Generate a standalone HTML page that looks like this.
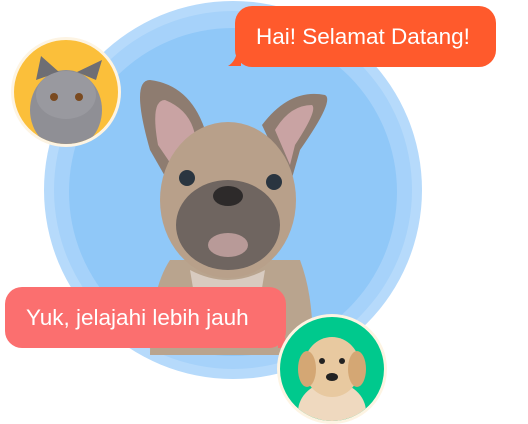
<!DOCTYPE html>
<html><head><style>
html,body{margin:0;padding:0;background:#fff;width:528px;height:424px;overflow:hidden;font-family:"Liberation Sans",sans-serif}
.b{position:absolute;color:#fff;font-size:22.5px;display:flex;align-items:center}
</style></head><body>
<svg width="528" height="424" style="position:absolute;left:0;top:0">
<circle cx="233" cy="190" r="189" fill="#b6dafb"/>
<circle cx="233" cy="190" r="179" fill="#a6d2fa"/>
<circle cx="233" cy="192" r="164" fill="#90c8f8"/>
<path d="M150 355 Q150 290 170 260 L300 260 Q315 300 312 355 Z" fill="#b9a48e"/>
<path d="M150 150 Q130 80 150 80 Q190 85 205 130 L170 185 Z" fill="#8e7c70"/>
<path d="M158 145 Q150 100 165 100 Q190 110 195 135 L175 170 Z" fill="#c9a3a3"/>
<path d="M300 150 Q335 100 325 95 Q290 88 262 125 L290 185 Z" fill="#8e7c70"/>
<path d="M295 145 Q318 110 312 105 Q290 105 275 130 L290 165 Z" fill="#c9a3a3"/>
<ellipse cx="228" cy="200" rx="68" ry="78" fill="#b8a08a"/>
<ellipse cx="228" cy="225" rx="52" ry="45" fill="#6f6560"/>
<ellipse cx="228" cy="196" rx="15" ry="10" fill="#2d2a2a"/>
<ellipse cx="228" cy="245" rx="20" ry="12" fill="#b89a98"/>
<circle cx="187" cy="178" r="8" fill="#2a3540"/>
<circle cx="274" cy="182" r="8" fill="#2a3540"/>
<path d="M190 270 Q228 290 265 270 L260 300 Q228 310 195 300 Z" fill="#d8cbc0"/>
</svg>
<div class="b" style="left:235px;top:6px;width:261px;height:61px;background:#ff5a2c;border-radius:17px;padding-left:21px;box-sizing:border-box;">Hai! Selamat Datang!</div>
<svg width="20" height="16" style="position:absolute;left:227px;top:52px"><path d="M14 0 L14 14 L1 14 Q8 10 10 0 Z" fill="#ff5a2c"/></svg>
<div style="position:absolute;left:11px;top:37px;width:104px;height:104px;border-radius:50%;background:#fbbf3a;border:3px solid #fdf4e3;overflow:hidden">
<svg width="104" height="104"><ellipse cx="52" cy="70" rx="36" ry="40" fill="#8f8f95"/><path d="M22 40 L27 16 L45 32 Z M82 40 L88 20 L63 32 Z" fill="#6e6e74"/><ellipse cx="52" cy="55" rx="30" ry="24" fill="#99999f"/><circle cx="40" cy="57" r="4" fill="#7a4a20"/><circle cx="65" cy="57" r="4" fill="#7a4a20"/></svg></div>
<div class="b" style="left:5px;top:287px;width:281px;height:61px;background:#fb6f6f;border-radius:17px;padding-left:21px;box-sizing:border-box;">Yuk, jelajahi lebih jauh</div>
<svg width="20" height="16" style="position:absolute;left:278px;top:334px"><path d="M0 0 L0 14 L16 14 Q8 10 6 0 Z" fill="#fb6f6f"/></svg>
<div style="position:absolute;left:277px;top:314px;width:104px;height:104px;border-radius:50%;background:#00c98d;border:3px solid #fdf4e3;overflow:hidden">
<svg width="104" height="104"><ellipse cx="52" cy="95" rx="34" ry="30" fill="#efd9bf"/><ellipse cx="52" cy="50" rx="28" ry="30" fill="#e8c9a0"/><ellipse cx="27" cy="52" rx="9" ry="18" fill="#d4a774"/><ellipse cx="77" cy="52" rx="9" ry="18" fill="#d4a774"/><circle cx="42" cy="44" r="3" fill="#222"/><circle cx="62" cy="44" r="3" fill="#222"/><ellipse cx="52" cy="60" rx="6" ry="4" fill="#222"/></svg></div>
</body></html>
